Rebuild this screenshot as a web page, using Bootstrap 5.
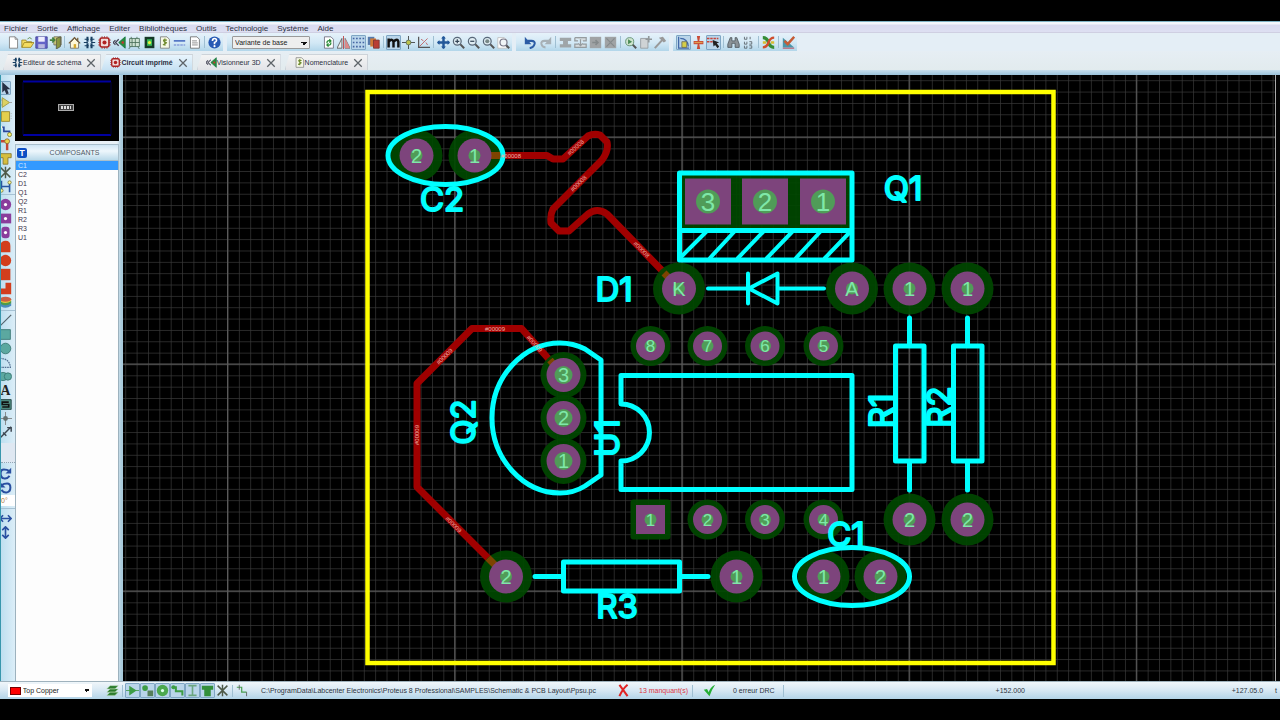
<!DOCTYPE html>
<html lang="fr">
<head>
<meta charset="utf-8">
<meta name="viewport" content="width=device-width, initial-scale=1">
<title>Circuit imprimé</title>
<link rel="stylesheet" href="https://cdn.jsdelivr.net/npm/bootstrap@5.3.0/dist/css/bootstrap.min.css">
<style>
body{font-family:"Liberation Sans",Arial,sans-serif;font-size:7px;line-height:10px;color:#2c3340;background:#000;overflow:hidden}
.app{min-height:100vh;padding:21px 0}
.menubar{height:12px;padding:2px 0 0 4px;gap:9px;font-size:8px;line-height:9px;border-top:1px solid #7fb3c6;border-bottom:1px solid #cfcfe2;background:linear-gradient(#f3f6fc 2px,#d9daf0 3px,#dddff2)}
.menubar a,.doc-tab a{color:#2b3042;text-decoration:none}
.ribbon{background:#e4eef6}
.toolrow{height:18px}
.band{height:18px;background:linear-gradient(#e6f2fa,#d2e8f5 55%,#b2d6ea);padding-right:1px}
.grip{width:3px;height:14px;background:radial-gradient(#8ea6b8 40%,transparent 50%) 0 0/2px 2px;flex:none}
.vsep{width:1px;height:12px;margin:0 2px;background:#9fbfd2;flex:none}
.tool{width:15px;height:15px;padding:0;border:1px solid transparent;border-radius:1px;background:none;display:flex;align-items:center;justify-content:center;flex:none}
.tool svg{width:13px;height:13px;flex:none}
.tool.pressed{border-color:#7fa6c4;background:#b9d5ea}
.group-narrow{padding-left:3px}
.group-narrow .tool{width:14px}
.pick{height:13px;font-family:inherit;font-size:7px;line-height:9px;padding:1px 10px 1px 2px;border:1px solid #9a9a9a;border-radius:1px;color:#222;background:linear-gradient(45deg,transparent 50%,#111 50%) right 5px top 5px/3px 3px no-repeat,linear-gradient(-45deg,transparent 50%,#111 50%) right 2px top 5px/3px 3px no-repeat,#eee;appearance:none}
.variant{width:78px;margin:0 8px 0 2px}
.tabrow{height:19px;padding:3px 0 0 3px;background:linear-gradient(#e6eef4,#e2ebee)}
.doc-tab{height:16px;padding:0 4px 0 8px;background:linear-gradient(#f4f4f4,#e2e4e8);border:1px solid #cdd3d9;border-bottom:0;clip-path:polygon(5px 0,100% 0,100% 100%,0 100%)}
.doc-tab svg{width:11px;height:11px;flex:none}
.doc-tab.current{background:linear-gradient(#e9f5fd,#c6e1f3);font-weight:bold}
.doc-tab .close-tab svg{width:10px;height:10px}
.close-tab{border:0;background:none;padding:0;margin-left:5px;display:flex}
.bluestrip{height:5px;background:linear-gradient(#c7deec,#9bc3db)}
.leftbar{width:15px;background:linear-gradient(90deg,#bedff0,#dceef8);border-left:1px solid #3897ad;padding-top:2px;overflow:hidden}
.leftbar .tool{width:12px;height:14px;margin-left:-2px}
.leftbar .hsep{height:1px;margin:1px 0 2px;background:#a6c2d4}
.leftbar .void{height:20px;margin:4px 0 3px;background:#dfe8f2;border-bottom:1px dotted #91a6b5}
.angle{width:14px;height:11px;border:0;padding:0;font-size:7px;background:#fff;color:#b07a40;margin:1px 0}
.side{width:108px;background:linear-gradient(90deg,#e8f1f7 102px,#a9cadb 106px)}
.overview{height:66px;width:104px;background:#000}
.side-head{height:17px;margin-top:3px;width:104px;background:linear-gradient(#cfe6f5,#eef7fc 40%,#b9d9ea);border:1px solid #a9bfcc;color:#4d5864}
.side-head b{width:10px;height:10px;margin-left:1px;border-radius:2px;background:#0d4fc4;color:#fff;font-size:9px}
.parts{width:104px;background:#fdfdfd;border-left:1px solid #9db2be;border-right:1px solid #9db2be;border-radius:0}
.parts .list-group-item{height:9px;padding:0 0 0 2px;border:0;border-radius:0;background:none;font-size:7px;line-height:9px;color:#40344a}
.parts .list-group-item.active{background:#3399ff;color:#cfe6ff}
.board{background:#000;min-width:0;overflow:hidden;position:relative}
.board svg{position:absolute;inset:0;width:100%;height:100%}
.edge{width:5px;background:#050505;border-left:1px solid #aaa}
.statusbar{height:18px;background:linear-gradient(#f0f6fa,#d9e9f4 45%,#b3d4e8);border-top:1px solid #9fb2bd;padding-left:3px}
.layer{width:72px;height:13px;border:0;background-color:#fff;padding-left:1px}
.layerbox{width:84px;background:#fff;margin:0 10px 0 2px}
.swatch{width:11px;height:8px;background:#f00;border:1px solid #700;margin:0 1px 0 2px}
.path{width:344px;white-space:nowrap}
.silk{fill:none;stroke:#0ff;stroke-width:5;stroke-linejoin:round;stroke-linecap:round}
.ref{font-family:Inter,"Open Sans",sans-serif;font-size:33px;font-weight:400;fill:#0ff;stroke:#0ff;stroke-width:2;stroke-linejoin:round;text-anchor:middle}
.net{font-size:6px;fill:#f0b0a8;text-anchor:middle}
.track{fill:none;stroke:#a00000;stroke-width:7;stroke-linejoin:round}
.tail{width:255px;padding-right:3px}
</style>
</head>
<body>
<svg width="0" height="0" class="position-absolute" aria-hidden="true"><defs>
<symbol id="new" viewBox="0 0 16 16"><path d="M3 1h7l3 3v11H3z" fill="#fff" stroke="#777"/><path d="M10 1v3h3" fill="none" stroke="#777"/></symbol>
<symbol id="open" viewBox="0 0 16 16"><path d="M1 14V5h5l1 2h6v2M1 14l3-6h12l-4 6z" fill="#f4dc60" stroke="#9b8420"/><path d="M8 4q3-4 5 0" fill="none" stroke="#4c7f32"/></symbol>
<symbol id="save" viewBox="0 0 16 16"><path d="M1 1h14v14H1z" fill="#6464c8" stroke="#3b3b92"/><path d="M4 1h8v6H4z" fill="#eef"/><path d="M4 10h8v5H4z" fill="#b8b8e0"/></symbol>
<symbol id="exit" viewBox="0 0 16 16"><path d="M6 1h9v10H6z" fill="#dcd680" stroke="#665"/><path d="M9 3l5-2v12l-5 3z" fill="#8a9740" stroke="#554"/><path d="M1 5h6m-3-3l3 3-3 3" stroke="#46823f" stroke-width="2" fill="none"/></symbol>
<symbol id="home" viewBox="0 0 16 16"><path d="M3 8v7h10V8L8 3z" fill="#fff8d8" stroke="#666"/><path d="M1 9l7-7 7 7M12 2v4" fill="none" stroke="#735b36" stroke-width="1.5"/><path d="M7 10h3v5H7z" fill="#d5a930"/></symbol>
<symbol id="sch" viewBox="0 0 16 16"><path d="M2 4h5M9 4h5M1 8h5M10 8h5M2 12h5M9 12h5" stroke="#173e61" stroke-width="1.500"/><path d="M5.500 1v6M10.500 1v6M5.500 9v6M10.500 9v6" stroke="#173e61" stroke-width="2.500"/></symbol>
<symbol id="pcb" viewBox="0 0 16 16"><path d="M5 0v16M8 0v16M11 0v16M0 5h16M0 8h16M0 11h16" stroke="#a55"/><rect x="2.500" y="2.500" width="11" height="11" rx="2" fill="#f0dcdc" stroke="#a22" stroke-width="2"/><circle cx="8" cy="8" r="2.500" fill="#b12222"/></symbol>
<symbol id="v3d" viewBox="0 0 16 16"><path d="M15 1v14L7 8z" fill="#2c8a3b" stroke="#174"/><path d="M7 4L3 8l4 4M3 5L0 8l3 3" fill="none" stroke="#445" stroke-width="1.500"/><circle cx="12" cy="8" r="1.500" fill="#c33"/></symbol>
<symbol id="gear" viewBox="0 0 16 16"><path d="M2 3h12v10H2zM5 3v10M9 3v10M2 8h12M4 1v2m7-2v2M3 13l-2 3m11-3l2 3" fill="#cfe4d4" stroke="#456b55"/></symbol>
<symbol id="chip" viewBox="0 0 16 16"><path d="M2 1h12v14H2z" fill="#163a28"/><path d="M5 4h6v8H5z" fill="#38c05a"/><circle cx="8" cy="8" r="2" fill="#e8f040"/></symbol>
<symbol id="bom" viewBox="0 0 16 16"><path d="M3 1h8l3 3v11H3z" fill="#f6f8e6" stroke="#777"/><path d="M11 5q-5-1-4 1t3 2-4 3M8.500 3v9" fill="none" stroke="#708b30" stroke-width="1.500"/></symbol>
<symbol id="rule" viewBox="0 0 16 16"><path d="M1 6h14" stroke="#4b6fc2" stroke-width="2"/><path d="M1 11h14" stroke="#88a0dc" stroke-width="2" stroke-dasharray="3 1"/></symbol>
<symbol id="doc" viewBox="0 0 16 16"><path d="M3 1h8l3 3v11H3z" fill="#fff" stroke="#666"/><path d="M5 6h6M5 8.500h7M5 11h7" stroke="#777"/></symbol>
<symbol id="help" viewBox="0 0 16 16"><circle cx="8" cy="8" r="7.500" fill="#2559b4"/><path d="M5.500 6q0-3 2.500-3t2.500 2.500Q10.500 7 8 8v2" stroke="#fff" stroke-width="2" fill="none"/><circle cx="8" cy="12.500" r="1.300" fill="#fff"/></symbol>
<symbol id="redraw" viewBox="0 0 16 16"><path d="M3 1h8l3 3v11H3z" fill="#fff" stroke="#667"/><path d="M6 9q0-4 4-3M11 8q0 4-4 3M9 4l2 2-2 2M8 9l-2 2 2 2" stroke="#278a35" stroke-width="1.500" fill="none"/></symbol>
<symbol id="mirror" viewBox="0 0 16 16"><path d="M6 3v12H0zM10 3v12h6z" fill="#eee" stroke="#555"/><path d="M10 3v12h6z" fill="#d88"/><path d="M8 0v16" stroke="#b33"/></symbol>
<symbol id="grid" viewBox="0 0 16 16"><path d="M1 3h14M1 8h14M1 13h14" stroke="#4464a2" stroke-width="2" stroke-dasharray="2 2"/></symbol>
<symbol id="layers" viewBox="0 0 16 16"><path d="M1 1h8v10H1z" fill="#567aab"/><path d="M4 3h7v10H4z" fill="#d27936"/><path d="M8 5h7v10H8z" fill="#b93e35" stroke="#733"/></symbol>
<symbol id="metric" viewBox="0 0 16 16"><path d="M2 14V3m0 4q4-5 6 0v7m0-7q5-5 6 0v7" fill="none" stroke="#111" stroke-width="3"/></symbol>
<symbol id="origin" viewBox="0 0 16 16"><path d="M8 0v16M0 8h16" stroke="#333"/><circle cx="8" cy="8" r="3" fill="#bcc34b" stroke="#565"/></symbol>
<symbol id="polar" viewBox="0 0 16 16"><path d="M2 1v13h14" fill="none" stroke="#555" stroke-width="1.500"/><path d="M3 13L13 3M5 4l3 2m3 2l2 3" stroke="#b55"/></symbol>
<symbol id="pan" viewBox="0 0 16 16"><path d="M8 1v14M1 8h14" stroke="#225799" stroke-width="3"/><path d="M5 3l3-3 3 3zM5 13l3 3 3-3zM3 5L0 8l3 3zM13 5l3 3-3 3z" fill="#225799"/></symbol>
<symbol id="zin" viewBox="0 0 16 16"><path d="M10 10l5 5" stroke="#555" stroke-width="2.500"/><circle cx="6.500" cy="6.500" r="4.800" fill="#dfecf2" stroke="#586879" stroke-width="1.500"/><path d="M4 6.500h5M6.500 4v5" stroke="#345" stroke-width="1.500"/></symbol>
<symbol id="zout" viewBox="0 0 16 16"><path d="M10 10l5 5" stroke="#555" stroke-width="2.500"/><circle cx="6.500" cy="6.500" r="4.800" fill="#dfecf2" stroke="#586879" stroke-width="1.500"/><path d="M4 6.500h5" stroke="#345" stroke-width="1.500"/></symbol>
<symbol id="zall" viewBox="0 0 16 16"><path d="M10 10l5 5" stroke="#555" stroke-width="2.500"/><circle cx="6.500" cy="6.500" r="4.800" fill="#dfecf2" stroke="#586879" stroke-width="1.500"/><circle cx="6.500" cy="6.500" r="2.500" fill="#788"/></symbol>
<symbol id="zarea" viewBox="0 0 16 16"><path d="M1 2h8l3 3v10H1z" fill="#fff" stroke="#bbb"/><path d="M11 11l4 4" stroke="#555" stroke-width="2.500"/><circle cx="8" cy="8" r="4.300" fill="#f1f5f7" stroke="#778" stroke-width="1.500"/></symbol>
<symbol id="undo" viewBox="0 0 16 16"><path d="M4 6h5q5 0 4 4t-6 5" fill="none" stroke="#2c5ca5" stroke-width="2.500"/><path d="M1 1v9h8z" fill="#2c5ca5"/></symbol>
<symbol id="redo" viewBox="0 0 16 16"><path d="M12 6H7q-5 0-4 4t5 4" fill="none" stroke="#a7b0b6" stroke-width="2.500"/><path d="M15 1v9H7z" fill="#a7b0b6"/></symbol>
<symbol id="b1" viewBox="0 0 16 16"><path d="M1 2h14v4h-4v4h4v4H1v-4h4V6H1z" fill="#9fa5a8"/></symbol>
<symbol id="b2" viewBox="0 0 16 16"><path d="M1 2h14v4h-4M1 2v4h4m0 4H1v4h14v-4h-4M8 4v8M5 9l3 3 3-3" fill="#d5dbde" stroke="#969c9f" stroke-width="1.500"/></symbol>
<symbol id="b3" viewBox="0 0 16 16"><path d="M1 1h14v14H1z" fill="#a0a3a5"/><path d="M4 8h7M8 5l3 3-3 3" stroke="#858a8c" fill="none" stroke-width="2"/></symbol>
<symbol id="b4" viewBox="0 0 16 16"><path d="M1 1h14v14H1z" fill="#a0a3a5"/><path d="M3 3l10 10M13 3L3 13" stroke="#858a8c" stroke-width="1.500"/></symbol>
<symbol id="picklib" viewBox="0 0 16 16"><path d="M10 10l5 5" stroke="#555" stroke-width="2.500"/><circle cx="7" cy="7" r="5" fill="#cfe4cf" stroke="#586"/><path d="M5 4v6l5-3z" fill="#498a55"/></symbol>
<symbol id="pack" viewBox="0 0 16 16"><path d="M2 3h9v12H2z" fill="#cfd3d5" stroke="#92989b"/><path d="M12 0v8M8 4h8" stroke="#92989b" stroke-width="2"/></symbol>
<symbol id="tool" viewBox="0 0 16 16"><path d="M1 15l9-10" stroke="#999" stroke-width="2.500"/><path d="M6 2l5-1 4 5-3 2z" fill="#999"/></symbol>
<symbol id="lock" viewBox="0 0 16 16"><path d="M2 1v14h13M4 3q9 0 10 10" fill="none" stroke="#4168a8" stroke-width="1.500"/><path d="M6 7h6v7H6z" fill="#d5cf48" stroke="#665"/></symbol>
<symbol id="cross" viewBox="0 0 16 16"><path d="M6 0h4l-1 6h5v4H9l1 6H6l1-6H2V6h5z" fill="#c94c37"/><path d="M3 8h10" stroke="#e0a050" stroke-width="1.500"/></symbol>
<symbol id="drag" viewBox="0 0 16 16"><path d="M0 3h14M0 7h8" stroke="#c84438" stroke-width="2" stroke-dasharray="3 1"/><path d="M7 5l8 3-3 1 3 4-2 2-3-4-2 2z" fill="#222"/></symbol>
<symbol id="find" viewBox="0 0 16 16"><path d="M4 2h2v4h4V2h2l3 8v4h-5v-5H6v5H1v-4z" fill="#8b9297" stroke="#4c555b"/></symbol>
<symbol id="u123" viewBox="0 0 16 16"><path d="M3 1v3h3V1m4 0v3M3 7v3h3V7m3 0h3v3H9M3 12v3h3v-3m3 0h3v3H9" fill="none" stroke="#555e64"/></symbol>
<symbol id="auto" viewBox="0 0 16 16"><path d="M1 2q5 0 7 6t7 6" stroke="#358c36" stroke-width="4" fill="none"/><path d="M1 14q5 0 7-6t7-6" stroke="#cf4d2c" stroke-width="3" fill="none"/><path d="M1 8h4m6 0h4" stroke="#d7bd32" stroke-width="3"/></symbol>
<symbol id="check" viewBox="0 0 16 16"><path d="M1 2v12h14z" fill="#4b95a9"/><path d="M15 1L7 10l-4-4" fill="none" stroke="#c65c36" stroke-width="3"/><path d="M1 15h14" stroke="#b34"/></symbol>
<symbol id="arrow" viewBox="0 0 16 16"><path d="M4 0v13l3-3 2 5 3-1-2-5h4z" fill="#283044"/></symbol>
<symbol id="comp" viewBox="0 0 16 16"><path d="M4 2v12l9-6z" fill="#dcd163" stroke="#9e963c"/><path d="M0 5h4M0 11h4M13 8h3" stroke="#999"/></symbol>
<symbol id="pkg" viewBox="0 0 16 16"><path d="M3 2h10v12H3z" fill="#e4cf4c" stroke="#938128"/><path d="M1 4v9M15 4v9" stroke="#999" stroke-dasharray="1 2"/></symbol>
<symbol id="trk" viewBox="0 0 16 16"><path d="M1 4h5v5h7v4" fill="none" stroke="#28469c" stroke-width="2"/><circle cx="2" cy="4" r="2" fill="#ffd"/><circle cx="13" cy="13" r="2.500" fill="#f7ef6c" stroke="#773"/></symbol>
<symbol id="via" viewBox="0 0 16 16"><path d="M1 4h9v11" fill="none" stroke="#c34736" stroke-width="3"/><circle cx="10" cy="4" r="3" fill="#ead34b" stroke="#863"/></symbol>
<symbol id="zone" viewBox="0 0 16 16"><path d="M1 2h14v5h-4v8H5V7H1z" fill="#d5be3e" stroke="#85752b"/></symbol>
<symbol id="rat" viewBox="0 0 16 16"><path d="M2 2l12 12M14 2L2 14M8 1v14" stroke="#4d5948" stroke-width="1.800"/></symbol>
<symbol id="net" viewBox="0 0 16 16"><path d="M3 1v12M13 3v12M3 8h10" stroke="#2855a1" stroke-width="2"/><circle cx="3" cy="13" r="2" fill="#fff89a" stroke="#773"/><circle cx="13" cy="3" r="2" fill="#fff89a" stroke="#773"/></symbol>
<symbol id="p1" viewBox="0 0 16 16"><circle cx="8" cy="8" r="7" fill="#8a3d9c"/><circle cx="8" cy="8" r="2" fill="#fff"/></symbol>
<symbol id="p2" viewBox="0 0 16 16"><path d="M1 2h14v12H1z" fill="#8a3d9c"/><circle cx="8" cy="8" r="2" fill="#fff"/></symbol>
<symbol id="p3" viewBox="0 0 16 16"><rect x="3" y="1" width="10" height="14" rx="4" fill="#8a3d9c"/><circle cx="8" cy="8" r="2" fill="#fff"/></symbol>
<symbol id="p4" viewBox="0 0 16 16"><path d="M2 15V7q0-6 6-6t6 6v8z" fill="#d23e1c"/></symbol>
<symbol id="p5" viewBox="0 0 16 16"><circle cx="8" cy="8" r="7" fill="#d23e1c"/></symbol>
<symbol id="p6" viewBox="0 0 16 16"><path d="M2 1h12v14H2z" fill="#d23e1c"/></symbol>
<symbol id="p7" viewBox="0 0 16 16"><path d="M8 1h7v14H1V8h7z" fill="#d23e1c"/></symbol>
<symbol id="stack" viewBox="0 0 16 16"><path d="M1 12q7 5 14 0V9H1z" fill="#4b8bbb"/><path d="M1 9q7 5 14 0V6H1z" fill="#4b9b4c"/><path d="M1 6q7 5 14 0V4H1z" fill="#e4c83c"/><ellipse cx="8" cy="4" rx="7" ry="3" fill="#cc5e42"/></symbol>
<symbol id="line" viewBox="0 0 16 16"><path d="M1 15L15 1" stroke="#54636b" stroke-width="1.500"/></symbol>
<symbol id="box" viewBox="0 0 16 16"><path d="M1 2h13v12H1z" fill="#5ba8a0" stroke="#36736e"/></symbol>
<symbol id="circ" viewBox="0 0 16 16"><circle cx="8" cy="8" r="6.500" fill="#5ba8a0" stroke="#36736e"/></symbol>
<symbol id="arc" viewBox="0 0 16 16"><path d="M1 3q12 0 13 11H1" fill="none" stroke="#526f91" stroke-width="1.500" stroke-dasharray="2 1"/></symbol>
<symbol id="shape" viewBox="0 0 16 16"><circle cx="5" cy="8" r="5" fill="#5ba8a0" stroke="#36736e"/><circle cx="11" cy="8" r="4.500" fill="#5ba8a0" stroke="#36736e"/></symbol>
<symbol id="txt" viewBox="0 0 16 16"><text x="8" y="14" font-size="17" font-weight="bold" text-anchor="middle" font-family="Liberation Serif,serif" fill="#222">A</text></symbol>
<symbol id="sym" viewBox="0 0 16 16"><path d="M1 2h14v12H1z" fill="#549184" stroke="#133"/><path d="M12 5H4v3h8v3H4" fill="none" stroke="#111" stroke-width="2"/></symbol>
<symbol id="mark" viewBox="0 0 16 16"><path d="M8 0v16M0 8h16" stroke="#777"/><circle cx="8" cy="8" r="3" fill="#66706f"/></symbol>
<symbol id="dim" viewBox="0 0 16 16"><path d="M1 15L15 1M10 2h5v5M5 8l4 4" fill="none" stroke="#3c4650" stroke-width="1.800"/></symbol>
<symbol id="cw" viewBox="0 0 16 16"><path d="M13 11q-3 4-7 3T2 8t4-5 7 2" fill="none" stroke="#294fa0" stroke-width="2.500"/><path d="M15 1v7H8z" fill="#294fa0"/></symbol>
<symbol id="ccw" viewBox="0 0 16 16"><path d="M3 11q3 4 7 3t4-6-4-5-7 2" fill="none" stroke="#294fa0" stroke-width="2.500"/><path d="M1 1v7h7z" fill="#294fa0"/></symbol>
<symbol id="fh" viewBox="0 0 16 16"><path d="M1 8h14M5 4L1 8l4 4m6-8l4 4-4 4" fill="none" stroke="#294fa0" stroke-width="2"/></symbol>
<symbol id="fv" viewBox="0 0 16 16"><path d="M8 1v14M4 5l4-4 4 4m-8 6l4 4 4-4" fill="none" stroke="#294fa0" stroke-width="2"/></symbol>
<symbol id="gst" viewBox="0 0 16 16"><path d="M1 14l4-4h10l-4 4zM1 10l4-4h10l-4 4zM1 6l4-4h10l-4 4z" fill="#2d7d2f" stroke="#b7d9b0" stroke-width=".6"/></symbol>
<symbol id="g1" viewBox="0 0 16 16"><path d="M4 2v12l9-6z" fill="#3d9d45"/><path d="M0 8h16" stroke="#3d9d45"/></symbol>
<symbol id="g2" viewBox="0 0 16 16"><circle cx="5" cy="5" r="3.500" fill="#3d9d45"/><path d="M8 8h7v7H8z" fill="#557f5a"/></symbol>
<symbol id="g3" viewBox="0 0 16 16"><circle cx="8" cy="8" r="7" fill="#4ba84e"/><circle cx="8" cy="8" r="2" fill="#dfe"/></symbol>
<symbol id="g4" viewBox="0 0 16 16"><path d="M1 4h5v5h8v5" fill="none" stroke="#3d9d45" stroke-width="2.500"/><circle cx="3" cy="4" r="2.500" fill="#3d9d45"/></symbol>
<symbol id="g5" viewBox="0 0 16 16"><path d="M3 2h10M3 14h10M8 2v12" stroke="#6ba681" stroke-width="2"/></symbol>
<symbol id="g6" viewBox="0 0 16 16"><path d="M1 2h14v5h-3v8H4V7H1z" fill="#328f3a"/></symbol>
<symbol id="g7" viewBox="0 0 16 16"><path d="M1 4h6v6h6" fill="none" stroke="#4a9e50" stroke-width="1.500"/><path d="M4 1v6M13 10v5" stroke="#555"/></symbol>
<symbol id="no" viewBox="0 0 16 16"><path d="M3 1l10 14M13 1Q7 6 3 15" fill="none" stroke="#e02424" stroke-width="2.500"/></symbol>
<symbol id="ok" viewBox="0 0 16 16"><path d="M1 7l4-1 2 4q2-6 8-9-5 7-7 14z" fill="#25ae35"/></symbol>
<symbol id="x" viewBox="0 0 16 16"><path d="M2 2l12 12M14 2L2 14" stroke="#5d6368" stroke-width="2"/></symbol>
</defs></svg>

<div class="app d-flex flex-column">
<nav class="menubar d-flex flex-shrink-0" aria-label="Menu"><a href="#">Fichier</a><a href="#">Sortie</a><a href="#">Affichage</a><a href="#">Editer</a><a href="#">Bibliothèques</a><a href="#">Outils</a><a href="#">Technologie</a><a href="#">Système</a><a href="#">Aide</a></nav>
<div class="ribbon flex-shrink-0">
 <div class="toolrow d-flex align-items-center">
  <div class="band d-flex align-items-center"><i class="grip"></i>
   <div class="d-flex group-narrow" data-tools="new open save exit"></div><i class="vsep"></i>
   <div class="d-flex" data-tools="home sch pcb v3d gear chip bom rule doc"></div><i class="vsep"></i>
   <div class="d-flex" data-tools="help"></div></div>
  <div class="band d-flex align-items-center ms-1"><i class="grip"></i>
   <select class="pick variant" aria-label="Variante"><option>Variante de base</option></select><i class="grip"></i>
   <div class="d-flex" data-tools="redraw mirror grid* layers"></div><i class="vsep"></i>
   <div class="d-flex" data-tools="metric* origin polar"></div><i class="vsep"></i>
   <div class="d-flex" data-tools="pan zin zout zall zarea"></div></div>
  <div class="band d-flex align-items-center ms-1"><i class="grip me-1"></i>
   <div class="d-flex" data-tools="undo redo"></div><i class="vsep"></i>
   <div class="d-flex" data-tools="b1 b2 b3 b4"></div><i class="vsep"></i>
   <div class="d-flex" data-tools="picklib pack tool"></div></div>
  <div class="band d-flex align-items-center ms-1"><i class="grip"></i>
   <div class="d-flex" data-tools="lock* cross drag*"></div><i class="vsep"></i>
   <div class="d-flex" data-tools="find u123"></div><i class="vsep"></i>
   <div class="d-flex" data-tools="auto"></div><i class="vsep"></i>
   <div class="d-flex" data-tools="check"></div></div>
 </div>
 <div class="tabrow d-flex">
  <div class="doc-tab d-flex align-items-center"><svg><use href="#sch"/></svg><a href="#">Editeur de schéma</a><button class="close-tab" aria-label="Fermer"><svg><use href="#x"/></svg></button></div>
  <div class="doc-tab current d-flex align-items-center"><svg><use href="#pcb"/></svg><a href="#">Circuit imprimé</a><button class="close-tab" aria-label="Fermer"><svg><use href="#x"/></svg></button></div>
  <div class="doc-tab d-flex align-items-center ms-1"><svg><use href="#v3d"/></svg><a href="#">Visionneur 3D</a><button class="close-tab" aria-label="Fermer"><svg><use href="#x"/></svg></button></div>
  <div class="doc-tab d-flex align-items-center ms-1"><svg><use href="#bom"/></svg><a href="#">Nomenclature</a><button class="close-tab" aria-label="Fermer"><svg><use href="#x"/></svg></button></div>
 </div>
 <div class="bluestrip"></div>
</div>

<main class="d-flex flex-grow-1">
 <div class="leftbar flex-shrink-0">
  <div class="grip w-100" style="height:4px"></div>
  <div data-tools="arrow* comp pkg trk via zone rat net"></div><div class="hsep"></div>
  <div data-tools="p1 p2 p3 p4 p5 p6 p7 stack"></div><div class="hsep"></div>
  <div data-tools="line box circ arc shape txt sym mark dim"></div><div class="void"></div>
  <div data-tools="cw ccw"></div><input class="angle" aria-label="Angle" value="0°"><div class="hsep"></div>
  <div data-tools="fh fv"></div>
 </div>
 <aside class="side d-flex flex-column flex-shrink-0">
  <svg class="overview" viewBox="0 0 104 66" aria-hidden="true"><path d="M8 6.500h88M8 60h88" stroke="#0000a0" stroke-width="2"/><path d="M8 7v53M96 7v53" stroke="#00003c"/><rect x="43.500" y="29.500" width="15" height="6" fill="#444" stroke="#aaa"/><path d="M46 32.500h10" stroke="#ddd" stroke-width="3" stroke-dasharray="2 1"/></svg>
  <div class="side-head d-flex align-items-center"><b class="d-flex align-items-center justify-content-center">T</b><span class="flex-grow-1 text-center ps-1">COMPOSANTS</span></div>
  <div class="parts list-group flex-grow-1">
   <button class="list-group-item list-group-item-action active">C1</button><button class="list-group-item list-group-item-action">C2</button><button class="list-group-item list-group-item-action">D1</button><button class="list-group-item list-group-item-action">Q1</button><button class="list-group-item list-group-item-action">Q2</button><button class="list-group-item list-group-item-action">R1</button><button class="list-group-item list-group-item-action">R2</button><button class="list-group-item list-group-item-action">R3</button><button class="list-group-item list-group-item-action">U1</button>
  </div>
 </aside>
 <div class="board flex-grow-1">
  <svg viewBox="123 75 1152 606" preserveAspectRatio="xMidYMid slice" role="img" aria-label="Circuit imprimé">
   <defs>
    <pattern id="minor" x="227.500" y="137" width="11.360" height="11.350" patternUnits="userSpaceOnUse"><path d="M0 0V11.350M0 0H11.360" stroke="#383838" stroke-width="1.400" fill="none"/></pattern>
    <pattern id="major" x="227" y="136.500" width="227.200" height="227" patternUnits="userSpaceOnUse"><path d="M.5 0V227.200M0 .5H227.200" stroke="#5a5a5a" stroke-width="1.500"/></pattern>
   </defs>
   <rect x="0" y="0" width="1400" height="800" fill="url(#minor)"/><rect x="0" y="0" width="1400" height="800" fill="url(#major)"/>
   <path d="M474 155.500H547L553 159H563L588 136Q594 133 600 135L607 142Q609 150 602 160L553 209Q550 215 551 223L559 231H569L588 214Q597 207 607 214L679 288M563 375L521.500 328.500H472L417 383.500V487L506 576" class="track"/>
   <g id="pads"></g>
   <rect x="367.500" y="92" width="686" height="571" fill="none" stroke="#ff0" stroke-width="4.500"/>
   <g class="silk">
    <ellipse cx="445.500" cy="155.500" rx="57.500" ry="29"/><ellipse cx="852" cy="576.500" rx="57.500" ry="29"/>
    <path d="M679.500 173H852V260H679.500ZM679.500 230.500H852"/>
    <path d="M682 256L706 232M710 258L734 232M738 258L763 232M767 258L792 232M796 258L820 232M825 258L850 232" stroke-width="4"/>
    <path d="M708 288.500H747M778 288.500H824M748 273.500V303.500M777.500 273.500V303.500L749 288.500Z" stroke-width="4"/>
    <path d="M621 375.500H852V489.500H621V461A28.500 28.500 0 0 0 621 404Z"/>
    <path d="M601 360L585 349Q573 343 560 343C524 343 492 376 492 418S524 493 560 493Q574 493 585 486L601 475Z"/>
    <path d="M895.500 346H924V461H895.500ZM953.500 346H982V461H953.500ZM909.500 318V346M967.500 318V346M909.500 461V490M967.500 461V490M563.500 562H679.500V591H563.500ZM535 576.500H563M680 576.500H708"/>
   </g>
   <g class="ref"><text x="442" y="211">C2</text><text x="903" y="200">Q1</text><text x="614" y="301">D1</text><text x="617" y="618">R3</text><text x="846" y="546">C1</text>
    <text transform="translate(475 422) rotate(-90)">Q2</text><text transform="translate(619 438) rotate(-90)">U1</text><text transform="translate(893 411) rotate(-90)">R1</text><text transform="translate(951 407) rotate(-90)">R2</text></g>
   <g class="net"><text x="511" y="158">#00008</text><text transform="translate(577 149) rotate(-43)">#00008</text><text transform="translate(580 185) rotate(-45)">#00008</text><text transform="translate(640 251) rotate(45)">#00008</text>
    <text x="495" y="331">#00009</text><text transform="translate(446 358) rotate(-45)">#00009</text><text transform="translate(419 435) rotate(-90)">#00009</text><text transform="translate(452 526) rotate(45)">#00009</text><text transform="translate(533 345) rotate(47)">#00009</text></g>
  </svg>
 </div>
 <div class="edge flex-shrink-0"></div>
</main>

<footer class="statusbar d-flex align-items-center flex-shrink-0">
 <i class="grip"></i>
 <div class="layerbox d-flex align-items-center"><i class="swatch"></i><select class="pick layer" aria-label="Couche"><option>Top Copper</option></select></div>
 <i class="grip"></i>
 <div class="d-flex" data-tools="gst"></div><i class="vsep"></i>
 <div class="d-flex" data-tools="g1* g2* g3* g4* g5* g6* rat"></div><i class="vsep"></i>
 <div class="d-flex" data-tools="g7"></div>
 <i class="grip ms-1 me-1"></i><span class="path">C:\ProgramData\Labcenter Electronics\Proteus 8 Professional\SAMPLES\Schematic &amp; PCB Layout\Ppsu.pc</span>
 <i class="grip ms-2"></i><div data-tools="no"></div><span class="text-danger ms-2">13 manquant(s)</span>
 <i class="vsep ms-1"></i><i class="grip ms-1"></i><div data-tools="ok"></div><span class="ms-3">0 erreur DRC</span>
 <i class="vsep ms-2"></i><i class="grip ms-1"></i>
 <span class="ms-auto">+152.000</span><span class="tail d-flex justify-content-end gap-2"><span class="me-1">+127.05.0</span><span>t</span></span>
</footer>
</div>
<script src="https://cdn.jsdelivr.net/npm/bootstrap@5.3.0/dist/js/bootstrap.bundle.min.js"></script>
<script>
// toolbars: each entry is a symbol id, a trailing * marks a pressed button
document.querySelectorAll('[data-tools]').forEach(box => {
  box.innerHTML = box.dataset.tools.split(' ').map(t => {
    const id = t.replace('*', '');
    return `<button class="tool${t.endsWith('*') ? ' pressed' : ''}" aria-label="${id}"><svg><use href="#${id}"/></svg></button>`;
  }).join('');
});
// pads: x, y, label, clearance radius, copper radius, hole radius, square
const pads = [
  [416.5,155.5,'2',26,17,6],[474.5,155.5,'1',26,17,6],[679,288.5,'K',26,17,6],[852,288.5,'A',26,17,6],
  [909.5,288.5,'1',26,17,6],[967.5,288.5,'1',26,17,6],[909.5,519.5,'2',26,17,6],[967.5,519.5,'2',26,17,6],
  [506,576.5,'2',26,17,6],[736.5,576.5,'1',26,17,6],[823.5,576.5,'1',26,17,6],[880.5,576.5,'2',26,17,6],
  [563.5,375,'3',23,17,9],[563.5,418,'2',23,17,9],[563.5,461,'1',23,17,9],
  [650.5,346,'8',20,14.5,6],[707.5,346,'7',20,14.5,6],[765,346,'6',20,14.5,6],[823.5,346,'5',20,14.5,6],
  [650.5,519.5,'1',20,14.5,6,1],[707.5,519.5,'2',20,14.5,6],[765,519.5,'3',20,14.5,6],[823.5,519.5,'4',20,14.5,6],
  [708,201.5,'3',29,23,12,1],[765,201.5,'2',29,23,12,1],[823,201.5,'1',29,23,12,1]
];
const shape = (x, y, r, sq, fill) => sq
  ? `<rect x="${x - r}" y="${y - r}" width="${2 * r}" height="${2 * r}" rx="${r === 20 ? 3 : 0}" fill="${fill}"/>`
  : `<circle cx="${x}" cy="${y}" r="${r}" fill="${fill}"/>`;
document.getElementById('pads').innerHTML =
  pads.map(([x, y, , g, , , s]) => shape(x, y, g, s, 'rgba(0,72,0,.92)')).join('') +
  '<path d="M489 155.500H500M664 273L671 280M550 360L555 366M488 558L496 566" stroke="#7d4300" stroke-width="7"/>' +
  pads.map(([x, y, t, g, c, h, s]) => {
    const size = h === 12 ? 26 : c === 17 ? 20 : 17;
    return shape(x, y, c, s, '#7d447c') + shape(x, y, h, 0, '#509c58') +
      `<text x="${x}" y="${y + size * .36}" font-size="${size}" text-anchor="middle" fill="#7fe8a8">${t}</text>`;
  }).join('');
</script>
</body>
</html>
